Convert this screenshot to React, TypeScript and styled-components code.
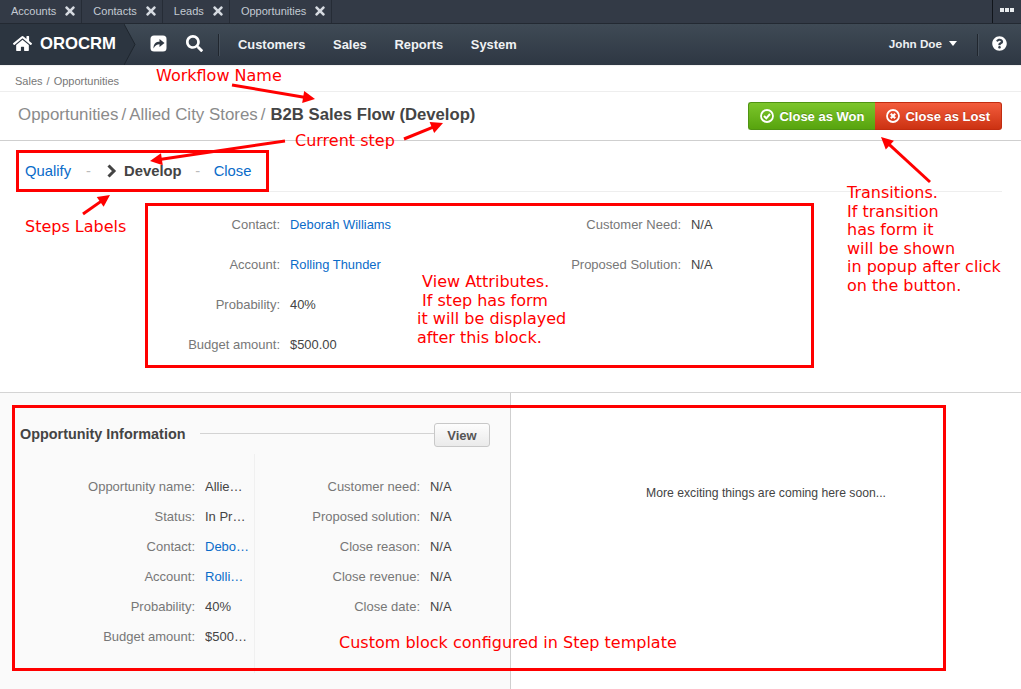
import React from "react";
import styled, { createGlobalStyle } from "styled-components";
import { FaHome, FaSearch, FaQuestionCircle, FaTimes } from "react-icons/fa";

const Global = createGlobalStyle`
  html, body { margin: 0; padding: 0; background: #fff; }
  body { font-family: "Liberation Sans", Arial, sans-serif; font-size: 13px; color: #444; overflow: hidden; }
`;
const Page = styled.div`position: relative; width: 1021px; height: 689px; overflow: hidden; background: #fff;`;
const TabBar = styled.div`display: flex; height: 23px; background: #333a46; border-bottom: 1px solid #232932;`;
const Tab = styled.div`
  display: flex; align-items: center; gap: 9px; padding: 0 6.1px 1px 11px; height: 23px; box-sizing: border-box;
  border-right: 1px solid #262c36; color: #c3cad3; font-size: 11px;
  svg { width: 10px; height: 14px; color: #d6dbe1; }
`;
const TabSpacer = styled.div`flex: 1;`;
const MoreTab = styled.div`
  width: 29px; display: flex; align-items: center; justify-content: center; gap: 1px; height: 23px;
  border-left: 1px solid #11151b; padding-bottom: 3px; box-sizing: border-box;
`;
const Dot = styled.i`width: 4px; height: 4px; background: #e8ebee; display: block;`;
const NavBar = styled.div`
  display: flex; align-items: center; height: 41px;
  background: linear-gradient(#3f4a55, #2e3743);
`;
const Brand = styled.div`
  width: 124px; height: 41px; display: flex; align-items: center; gap: 8px; padding-left: 13px;
  box-sizing: border-box; background: #2c3540; color: #fff; font-weight: 700; font-size: 16.7px;
  svg { width: 19px; height: 19px; margin-top: -3px; }
  span { margin-top: -2px; }
`;
const BrandTip = styled.svg`width: 12px; height: 41px; flex: none; display: block;`;
const NavIcons = styled.div`
  display: flex; align-items: center; gap: 19px; padding: 0 0 2px 14px; width: 82px; box-sizing: border-box; color: #fff;
  svg { width: 17px; height: 17px; flex: none; }
`;
const Sep = styled.div`width: 1px; height: 22px; background: #20262e; box-shadow: 1px 0 0 #46505b;`;
const Menu = styled.div`display: flex; gap: 27.7px; padding-left: 19px; flex: 1; font-weight: 700; font-size: 12.9px; color: #f0f2f4;`;
const User = styled.div`
  display: flex; align-items: center; gap: 7px; font-weight: 700; font-size: 11.7px; color: #eef0f2; padding: 0 20px 2px 0;
`;
const Caret = styled.i`width: 0; height: 0; border: 4.5px solid transparent; border-top: 5px solid #fff; border-bottom: 0;`;
const Help = styled.div`
  width: 43px; display: flex; justify-content: center; color: #fff;
  svg { width: 15px; height: 15px; margin-top: -3px; }
`;
const Crumbs = styled.div`
  height: 27px; padding: 10px 0 0 15px; box-sizing: border-box; border-bottom: 1px solid #eeeeee;
  font-size: 11px; color: #777; box-shadow: inset 0 2px 2px -2px #ccc; word-spacing: 1px;
`;
const TitleBar = styled.div`
  display: flex; justify-content: space-between; height: 49px; box-sizing: border-box; padding: 10px 19px 0 18px;
  border-bottom: 1px solid #cfcfcf;
`;
const Title = styled.div`display: flex; gap: 3px; font-size: 16.9px; color: #8b8b8b; line-height: 24px; margin-top: 1px;`;
const TitleStrong = styled.b`color: #444; font-weight: 700; font-size: 16.7px; margin-left: 2px;`;
const Buttons = styled.div`display: flex; height: 28px;`;
const Btn = styled.div<{ $won?: boolean }>`
  display: flex; align-items: center; gap: 5px; padding: 0 11px; box-sizing: border-box; height: 28px;
  color: #fff; font-weight: 700; font-size: 13px; text-shadow: 0 -1px 0 rgba(0,0,0,.2);
  background: ${(p) => (p.$won ? "linear-gradient(#7cc52b, #57a40e)" : "linear-gradient(#f35c3c, #cc3212)")};
  border: 1px solid ${(p) => (p.$won ? "#4f9412" : "#c22c10")};
  border-radius: ${(p) => (p.$won ? "3px 0 0 3px" : "0 3px 3px 0")};
  border-${(p) => (p.$won ? "right" : "left")}: 0;
  svg { width: 14px; height: 14px; }
`;
const Steps = styled.div`
  display: flex; align-items: center; height: 51px; margin: 0 19px 0 25px; font-size: 14.8px;
  border-bottom: 1px solid #eeeeee; padding-top: 10px; box-sizing: border-box;
`;
const StepLink = styled.span`color: #0a6bc9;`;
const StepDash = styled.span<{ $w: number }>`color: #bbb; width: ${(p) => p.$w}px; text-align: center;`;
const StepCurrent = styled.b`
  display: flex; align-items: center; gap: 7px; color: #444; font-size: 14.8px;
  svg { width: 11px; height: 14px; flex: none; }
`;
const AttrGrid = styled.div`
  display: grid; grid-template-columns: 510px 1fr; height: 201px; border-bottom: 1px solid #d4d4d4; padding-top: 23px;
  box-sizing: border-box;
`;
const AttrCol = styled.div`display: flex; flex-direction: column; gap: 20px;`;
const AttrRow = styled.div<{ $w: number }>`
  display: grid; grid-template-columns: ${(p) => p.$w}px 1fr; column-gap: 10px; line-height: 20px; font-size: 13px;
`;
const Label = styled.span`text-align: right; color: #777;`;
const Value = styled.span<{ $link?: boolean }>`color: ${(p) => (p.$link ? "#0a6bc9" : "#444")}; white-space: nowrap; font-size: 12.9px;`;
const Bottom = styled.div`display: grid; grid-template-columns: 511px 1fr; height: 296px;`;
const LeftPanel = styled.div`background: #fafafa; border-right: 1px solid #cfcfcf; padding: 30px 20px 0 20px; `;
const RightPanel = styled.div`padding-top: 93px; text-align: center; font-size: 12.2px; color: #444;`;
const SectionHead = styled.div`display: flex; align-items: center; height: 24px;`;
const SectionTitle = styled.b`font-size: 14.4px; color: #444; margin-top: -3px;`;
const SectionLine = styled.div`flex: 1; height: 1px; background: #d3d3d3; margin: -3px 0 0 15px;`;
const ViewBtn = styled.div`
  width: 56px; height: 24px; box-sizing: border-box; border: 1px solid #c8c8c8; border-radius: 3px;
  background: linear-gradient(#fdfdfd, #eaeaea); font-weight: 700; font-size: 13px; color: #555;
  display: flex; align-items: center; justify-content: center;
`;
const InfoGrid = styled.div`display: grid; grid-template-columns: 235px 1fr; margin-top: 7px;`;
const InfoCol = styled.div<{ $left?: boolean }>`
  display: flex; flex-direction: column; gap: 10px; padding-top: 23px; height: 219px; box-sizing: border-box;
  ${(p) => (p.$left ? "border-right: 1px solid #f0f0f0;" : "")}
`;
const InfoRow = styled.div<{ $w: number }>`
  display: grid; grid-template-columns: ${(p) => p.$w}px 1fr; column-gap: 10px; line-height: 20px; font-size: 13px;
`;
const Clip = styled(Value)`overflow: hidden; text-overflow: ellipsis; min-width: 0; max-width: 44.5px; font-size: 13px;`;
const RedBox = styled.div<{ $x: number; $y: number; $w: number; $h: number }>`
  position: absolute; left: ${(p) => p.$x}px; top: ${(p) => p.$y}px; width: ${(p) => p.$w}px; height: ${(p) => p.$h}px;
  border: 3px solid #f00; box-sizing: border-box;
`;
const Note = styled.div<{ $x: number; $y: number }>`
  position: absolute; left: ${(p) => p.$x}px; top: ${(p) => p.$y}px; color: #f00; font-family: "DejaVu Sans", sans-serif;
  font-size: 16px; line-height: 18.6px; white-space: pre;
`;
const Arrows = styled.svg`position: absolute; left: 0; top: 0; width: 1021px; height: 689px; pointer-events: none;`;

const ShareIcon = () => (
  <svg viewBox="0 0 17 17">
    <rect x="0.5" y="0.5" width="16" height="16" rx="3.5" fill="#fff" />
    <path d="M3.5 13.5C3.5 8.5 6 6.8 9.5 6.8V4L14.5 8L9.5 12V9.3C7 9.3 5 10.5 3.5 13.5Z" fill="#2f3843" />
  </svg>
);
const CheckRing = () => (
  <svg viewBox="0 0 14 14" fill="none" stroke="#fff">
    <circle cx="7" cy="7" r="6" strokeWidth="1.8" />
    <path d="M4 7L6.3 9.3L10 5" strokeWidth="2" />
  </svg>
);
const CrossRing = () => (
  <svg viewBox="0 0 14 14" fill="none" stroke="#fff">
    <circle cx="7" cy="7" r="6" strokeWidth="1.8" />
    <path d="M4.8 4.8L9.2 9.2M9.2 4.8L4.8 9.2" strokeWidth="2.2" />
  </svg>
);
const StepChevron = () => (
  <svg viewBox="0 0 11 14" fill="none" stroke="#444">
    <path d="M2.5 1.5L8 7L2.5 12.5" strokeWidth="3" />
  </svg>
);

const Arrow = ({ x1, y1, x2, y2 }: { x1: number; y1: number; x2: number; y2: number }) => {
  const a = Math.atan2(y2 - y1, x2 - x1);
  const p = (d: number, o: number) =>
    `${x2 - d * Math.cos(a) + o * Math.cos(a + Math.PI / 2)},${y2 - d * Math.sin(a) + o * Math.sin(a + Math.PI / 2)}`;
  return (
    <g>
      <line x1={x1} y1={y1} x2={x2 - 8 * Math.cos(a)} y2={y2 - 8 * Math.sin(a)} stroke="#f00" strokeWidth="3" />
      <polygon points={`${x2},${y2} ${p(12, 6)} ${p(12, -6)}`} fill="#f00" />
    </g>
  );
};

const info = [
  ["Opportunity name:", "Allied City Stores", false], ["Status:", "In Progress", false],
  ["Contact:", "Deborah Williams", true], ["Account:", "Rolling Thunder", true],
  ["Probability:", "40%", false], ["Budget amount:", "$500.00", false],
] as const;
const info2 = ["Customer need:", "Proposed solution:", "Close reason:", "Close revenue:", "Close date:"];

export default function App() {
  return (
    <Page>
      <Global />
      <TabBar>
        {["Accounts", "Contacts", "Leads", "Opportunities"].map((t) => (
          <Tab key={t}>{t}<FaTimes /></Tab>
        ))}
        <TabSpacer />
        <MoreTab><Dot /><Dot /><Dot /></MoreTab>
      </TabBar>
      <NavBar>
        <Brand><FaHome /><span>OROCRM</span></Brand>
        <BrandTip viewBox="0 0 12 41"><path d="M0 0L11 20.5L0 41Z" fill="#2c3540" /><path d="M0 0L11 20.5L0 41" fill="none" stroke="#1f262e" /></BrandTip>
        <NavIcons><ShareIcon /><FaSearch /></NavIcons>
        <Sep />
        <Menu><span>Customers</span><span>Sales</span><span>Reports</span><span>System</span></Menu>
        <User>John Doe <Caret /></User>
        <Sep />
        <Help><FaQuestionCircle /></Help>
      </NavBar>
      <Crumbs>Sales / Opportunities</Crumbs>
      <TitleBar>
        <Title>
          <span>Opportunities</span><span>/</span><span>Allied City Stores</span><span>/</span>
          <TitleStrong>B2B Sales Flow (Develop)</TitleStrong>
        </Title>
        <Buttons>
          <Btn $won><CheckRing />Close as Won</Btn>
          <Btn><CrossRing />Close as Lost</Btn>
        </Buttons>
      </TitleBar>
      <Steps>
        <StepLink>Qualify</StepLink>
        <StepDash $w={35}>-</StepDash>
        <StepCurrent><StepChevron />Develop</StepCurrent>
        <StepDash $w={32}>-</StepDash>
        <StepLink>Close</StepLink>
      </Steps>
      <AttrGrid>
        <AttrCol>
          <AttrRow $w={280}><Label>Contact:</Label><Value $link>Deborah Williams</Value></AttrRow>
          <AttrRow $w={280}><Label>Account:</Label><Value $link>Rolling Thunder</Value></AttrRow>
          <AttrRow $w={280}><Label>Probability:</Label><Value>40%</Value></AttrRow>
          <AttrRow $w={280}><Label>Budget amount:</Label><Value>$500.00</Value></AttrRow>
        </AttrCol>
        <AttrCol>
          <AttrRow $w={171}><Label>Customer Need:</Label><Value>N/A</Value></AttrRow>
          <AttrRow $w={171}><Label>Proposed Solution:</Label><Value>N/A</Value></AttrRow>
        </AttrCol>
      </AttrGrid>
      <Bottom>
        <LeftPanel>
          <SectionHead>
            <SectionTitle>Opportunity Information</SectionTitle>
            <SectionLine />
            <ViewBtn>View</ViewBtn>
          </SectionHead>
          <InfoGrid>
            <InfoCol $left>
              {info.map(([l, v, link]) => (
                <InfoRow $w={175} key={l}><Label>{l}</Label><Clip $link={link}>{v}</Clip></InfoRow>
              ))}
            </InfoCol>
            <InfoCol>
              {info2.map((l) => (
                <InfoRow $w={165} key={l}><Label>{l}</Label><Value>N/A</Value></InfoRow>
              ))}
            </InfoCol>
          </InfoGrid>
        </LeftPanel>
        <RightPanel>More exciting things are coming here soon...</RightPanel>
      </Bottom>

      <RedBox $x={16} $y={150} $w={253} $h={42} />
      <RedBox $x={145} $y={203} $w={669} $h={165} />
      <RedBox $x={12} $y={405} $w={934} $h={266} />
      <Arrows viewBox="0 0 1021 689">
        <Arrow x1={232} y1={85} x2={315} y2={99} />
        <Arrow x1={285} y1={141} x2={150} y2={161} />
        <Arrow x1={404} y1={139} x2={443} y2={123} />
        <Arrow x1={83} y1={214} x2={110} y2={195} />
        <Arrow x1={930} y1={182} x2={881} y2={137} />
      </Arrows>
      <Note $x={156} $y={67}>Workflow Name</Note>
      <Note $x={295} $y={132}>Current step</Note>
      <Note $x={25} $y={218}>Steps Labels</Note>
      <Note $x={417} $y={273}>{" View Attributes.\n If step has form\nit will be displayed\nafter this block."}</Note>
      <Note $x={847} $y={184}>{"Transitions.\nIf transition\nhas form it\nwill be shown\nin popup after click\non the button."}</Note>
      <Note $x={339} $y={634}>Custom block configured in Step template</Note>
    </Page>
  );
}
